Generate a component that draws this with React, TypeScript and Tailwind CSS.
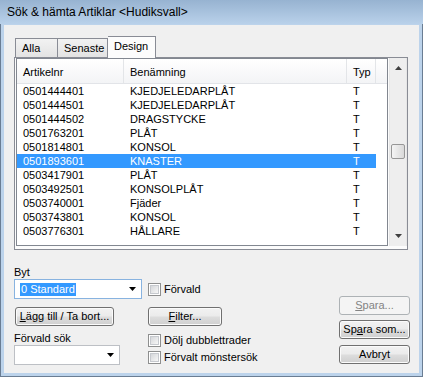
import React from 'react';

const rows = [
  ['0501444401', 'KJEDJELEDARPLÅT', 'T'],
  ['0501444501', 'KJEDJELEDARPLÅT', 'T'],
  ['0501444502', 'DRAGSTYCKE', 'T'],
  ['0501763201', 'PLÅT', 'T'],
  ['0501814801', 'KONSOL', 'T'],
  ['0501893601', 'KNASTER', 'T'],
  ['0503417901', 'PLÅT', 'T'],
  ['0503492501', 'KONSOLPLÅT', 'T'],
  ['0503740001', 'Fjäder', 'T'],
  ['0503743801', 'KONSOL', 'T'],
  ['0503776301', 'HÅLLARE', 'T'],
];
const selected = 5;

function Tri({ up, color = '#000' }: { up?: boolean; color?: string }) {
  return (
    <svg width="7" height="4" viewBox="0 0 7 4">
      <path d={up ? 'M0 4H7L3.5 0Z' : 'M0 0H7L3.5 4Z'} fill={color} />
    </svg>
  );
}

function Check({ label }: { label: string }) {
  return (
    <div className="flex items-center h-[13px] gap-[3px]">
      <span className="w-[13px] h-[13px] border border-[#8e8f8f] bg-white p-[1px]">
        <span className="block w-full h-full border border-[#c6c9ce] bg-gradient-to-br from-[#d5d7da] to-[#f7f7f7]" />
      </span>
      <span>{label}</span>
    </div>
  );
}

function Btn({ children, className = '', disabled }: { children: React.ReactNode; className?: string; disabled?: boolean }) {
  return (
    <div
      className={
        'h-[19px] rounded-[3px] border flex items-center justify-center ' +
        (disabled
          ? 'border-[#adb2b5] bg-[#f4f4f4] text-[#838383] '
          : 'border-[#707070] bg-[linear-gradient(to_bottom,#f2f2f2_0%,#ebebeb_48%,#dddddd_52%,#cfcfcf_100%)] shadow-[inset_0_0_0_1px_#fbfbfb] ') +
        className
      }
    >
      {children}
    </div>
  );
}

export default function App() {
  return (
    <div className="w-[423px] h-[377px] flex flex-col bg-[#bcd3eb] border border-[#6a7d93] font-['Tahoma','Liberation_Sans',sans-serif] text-[11px] leading-[13px] text-black">
      {/* title bar */}
      <div className="h-[24px] -mx-px -mt-px pl-[7px] pt-px flex items-center bg-gradient-to-b from-[#97b3d1] to-[#b9d1ea] text-[12px] font-['Liberation_Sans',sans-serif]">
        Sök &amp; hämta Artiklar &lt;Hudiksvall&gt;
      </div>

      <div className="flex-1 mx-[3px] mb-[3px] mt-px bg-[#f0f0f0] px-[10px] flex flex-col">
        {/* tabs */}
        <div className="mt-[11px] h-[21px] flex items-end pl-px">
          <div className="w-[43px] h-[19px] border border-b-0 border-[#898c95] bg-gradient-to-b from-[#f2f2f2] to-[#e3e3e3] pl-[6px] flex items-center">Alla</div>
          <div className="w-[50px] h-[19px] border border-l-0 border-b-0 border-[#898c95] bg-gradient-to-b from-[#f2f2f2] to-[#e3e3e3] pl-[6px] flex items-center">Senaste</div>
          <div className="relative z-10 -mb-px w-[48px] h-[22px] border border-l-0 border-b-0 border-[#898c95] bg-[#fcfcfc] pl-[6px] pb-[2px] flex items-center">Design</div>
        </div>

        {/* tab page */}
        <div className="w-[394px] h-[193px] border border-[#898c95] bg-[#fcfcfc] flex pl-px">
          <div className="w-[373px] h-[188px] border border-[#828790] bg-white flex flex-col">
            <div className="h-[25px] flex items-stretch border-b border-[#e2e4e8] bg-gradient-to-b from-white to-[#f3f4f6]">
              <div className="w-[107px] pl-[6px] pt-[2px] flex items-center border-r border-[#e3e5e8]">Artikelnr</div>
              <div className="w-[223px] pl-[6px] pt-[2px] flex items-center border-r border-[#e3e5e8]">Benämning</div>
              <div className="w-[29px] pl-[6px] pt-[2px] flex items-center border-r border-[#e3e5e8]">Typ</div>
              <div className="flex-1" />
            </div>
            {rows.map((r, i) => (
              <div key={r[0]} className={'w-[359px] h-[14px] flex items-center ' + (i === selected ? 'bg-[#3399ff] text-white' : '')}>
                <div className="w-[107px] pl-[6px]">{r[0]}</div>
                <div className="w-[223px] pl-[6px]">{r[1]}</div>
                <div className="w-[29px] pl-[6px]">{r[2]}</div>
              </div>
            ))}
          </div>
          {/* scrollbar */}
          <div className="w-[18px] h-[188px] flex flex-col items-center border-x border-[#e6e6e6] bg-[#eeeeee] ml-px">
            <div className="h-[18px] flex items-center justify-center pt-[2px]">
              <Tri up color="#404040" />
            </div>
            <div className="h-[68px]" />
            <div className="w-[14px] h-[15px] rounded-[2px] border border-[#979797] bg-gradient-to-r from-[#f5f5f5] to-[#d9d9d9]" />
            <div className="flex-1" />
            <div className="h-[18px] flex items-center justify-center pb-[2px]">
              <Tri color="#404040" />
            </div>
          </div>
        </div>

        {/* bottom controls */}
        <div className="flex">
          <div className="w-[128px] flex flex-col">
            <div className="mt-[16px] h-[13px]">Byt</div>
            <div className="h-[20px] border border-[#88b3e0] bg-white flex items-center pl-[5px] pr-[5px]">
              <span className="bg-[#3399ff] text-white px-px">0 Standard</span>
              <span className="flex-1" />
              <Tri />
            </div>
            <Btn className="mt-[8px] ml-px w-[99px]">
              <span><span className="underline">L</span>ägg till / Ta bort...</span>
            </Btn>
            <div className="mt-[6px] h-[13px]">Förvald sök</div>
            <div className="w-[106px] h-[20px] border border-[#bdc0c5] bg-white flex items-center justify-end pr-[5px]">
              <Tri />
            </div>
          </div>

          <div className="ml-[6px] flex-1 flex flex-col">
            <div className="mt-[29px] h-[20px] flex items-center">
              <Check label="Förvald" />
            </div>
            <Btn className="mt-[8px] w-[74px]">
              <span><span className="underline">F</span>ilter...</span>
            </Btn>
            <div className="mt-[8px]">
              <Check label="Dölj dubblettrader" />
            </div>
            <div className="mt-[4px]">
              <Check label="Förvalt mönstersök" />
            </div>
          </div>

          <div className="w-[71px] -mr-px flex flex-col">
            <Btn disabled className="mt-[46px]">
              <span><span className="underline">S</span>para...</span>
            </Btn>
            <Btn className="mt-[5px]">
              <span>Sp<span className="underline">a</span>ra som...</span>
            </Btn>
            <Btn className="mt-[6px]">Avbryt</Btn>
          </div>
        </div>
      </div>
    </div>
  );
}
